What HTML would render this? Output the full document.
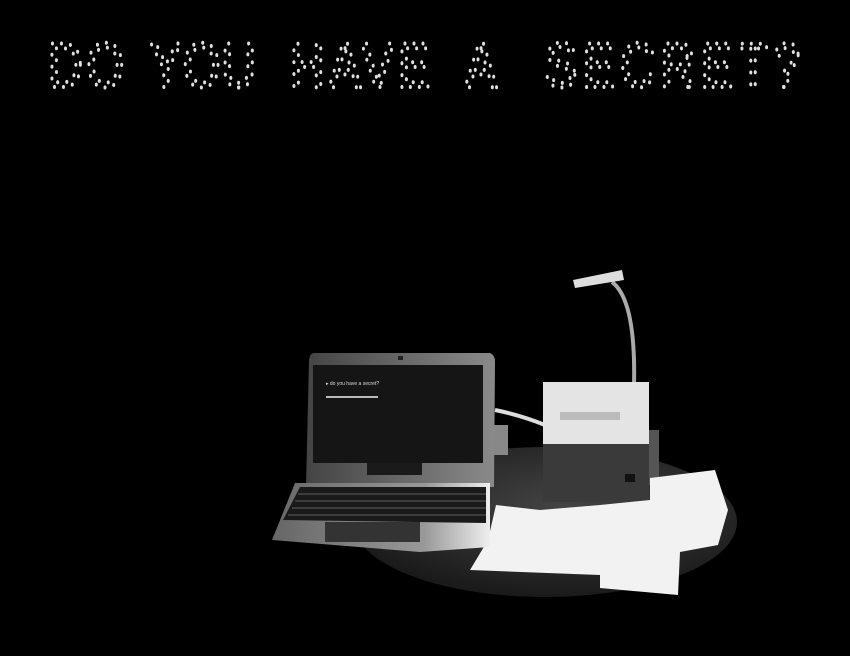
<!DOCTYPE html>
<html><head><meta charset="utf-8"><style>
html,body{margin:0;padding:0;background:#000;width:850px;height:656px;overflow:hidden}
</style></head><body>
<svg width="850" height="656" viewBox="0 0 850 656" xmlns="http://www.w3.org/2000/svg">
<defs>
<radialGradient id="tbl" cx="0.55" cy="0.4" r="0.6">
<stop offset="0" stop-color="#444"/><stop offset="1" stop-color="#1a1a1a"/>
</radialGradient>
<linearGradient id="kb" x1="0" y1="0" x2="1" y2="0">
<stop offset="0" stop-color="#666"/><stop offset="0.7" stop-color="#999"/><stop offset="1" stop-color="#eee"/>
</linearGradient>
<linearGradient id="lid" x1="0" y1="0" x2="1" y2="0">
<stop offset="0" stop-color="#444"/><stop offset="1" stop-color="#8a8a8a"/>
</linearGradient>
</defs>
<rect width="850" height="656" fill="#000"/>
<g transform="translate(0,87) scale(1,1.32)" font-family="Liberation Sans, sans-serif" font-size="48" lengthAdjust="spacingAndGlyphs" fill="none" stroke="#e0e0e0" stroke-width="3" stroke-linecap="round" stroke-dasharray="0 9">
<text x="48" y="0" textLength="76">DO</text>
<text x="150" y="0" textLength="106">YOU</text>
<text x="290" y="0" textLength="140">HAVE</text>
<text x="465" y="0" textLength="38">A</text>
<text x="545" y="0" textLength="255">SECRET?</text>
</g>
<ellipse cx="545" cy="522" rx="192" ry="75" fill="url(#tbl)"/>
<path d="M612 282 Q636 300 634 385" stroke="#aaa" stroke-width="4" fill="none"/>
<path d="M573 280 L622 270 L624 280 L575 288 Z" fill="#ddd"/>
<path d="M495 410 Q520 415 545 425" stroke="#ddd" stroke-width="4" fill="none"/>
<rect x="494" y="425" width="14" height="30" fill="#888"/>
<rect x="543" y="382" width="106" height="62" fill="#e4e4e4"/>
<rect x="560" y="412" width="60" height="8" fill="#bbb"/>
<rect x="543" y="444" width="106" height="58" fill="#3a3a3a"/>
<rect x="649" y="430" width="10" height="55" fill="#555"/>
<rect x="625" y="474" width="10" height="8" fill="#111"/>
<path d="M650 478 L715 470 L728 510 L718 545 L680 552 L678 595 L600 588 L600 575 L470 570 L488 540 L496 505 L540 510 L600 505 L650 500 Z" fill="#f2f2f2"/>
<path d="M314 353 L490 353 Q495 355 495 362 L494 487 L306 487 L309 360 Q310 353 314 353 Z" fill="url(#lid)"/>
<rect x="313" y="365" width="170" height="98" fill="#151515"/>
<rect x="367" y="463" width="55" height="12" fill="#1a1a1a"/>
<rect x="398" y="356" width="5" height="4" fill="#222"/>
<text x="326" y="385" font-family="Liberation Sans, sans-serif" font-size="5" fill="#ddd">▸ do you have a secret?</text>
<rect x="326" y="396" width="52" height="2" fill="#bbb"/>
<path d="M295 483 L490 483 L490 547 L420 552 L272 540 Z" fill="url(#kb)"/>
<path d="M300 487 L486 487 L486 523 L283 520 Z" fill="#1a1a1a"/>
<g stroke="#777" stroke-width="0.8">
<line x1="298" y1="494" x2="486" y2="494"/><line x1="295" y1="501" x2="486" y2="501"/>
<line x1="292" y1="508" x2="486" y2="508"/><line x1="288" y1="515" x2="486" y2="515"/>
</g>
<rect x="325" y="522" width="95" height="20" fill="#333"/>
</svg>
</body></html>
